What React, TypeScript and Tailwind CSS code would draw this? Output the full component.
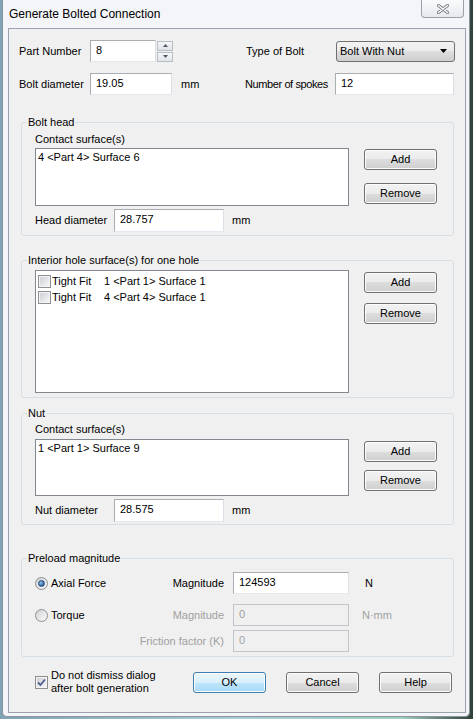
import React from "react";

const inputBox =
  "bg-white border border-[#abadb3] border-r-[#dbdfe6] border-b-[#e3e9ef] pl-[5px] pt-[3px] leading-[13px]";

function WinButton({ label, isDefault }: { label: string; isDefault?: boolean }) {
  return (
    <div
      className={`w-[73px] h-[21px] flex items-center justify-center rounded-[3px] border leading-[13px] shadow-[inset_0_0_0_1px_#fcfcfc] ${
        isDefault
          ? "border-[#3c7fb1] bg-[linear-gradient(#eaf6fd_0%,#d9f0fc_50%,#bee6fd_50%,#a7d9f5_100%)] shadow-[inset_0_0_0_1px_#bfe6fb]"
          : "border-[#707070] bg-[linear-gradient(#f2f2f2_0%,#ebebeb_50%,#dddddd_50%,#cfcfcf_100%)]"
      }`}
    >
      {label}
    </div>
  );
}

function CheckBox({ checked }: { checked?: boolean }) {
  return (
    <div className="w-[13px] h-[13px] border border-[#8e8f8f] bg-[#f4f4f4] p-[1px] shrink-0">
      <div className="w-full h-full bg-[linear-gradient(135deg,#cdd0d5,#f7f7f7)] flex items-center justify-center">
        {checked && (
          <svg width="9" height="9" viewBox="0 0 9 9">
            <path d="M1 4.5 L3.5 7 L8 1.5" fill="none" stroke="#4b5f8f" strokeWidth="1.8" />
          </svg>
        )}
      </div>
    </div>
  );
}

function Radio({ checked }: { checked?: boolean }) {
  return (
    <div className="w-[13px] h-[13px] rounded-full border border-[#8e8f8f] bg-[linear-gradient(135deg,#cfd2d6,#fbfbfb)] flex items-center justify-center shrink-0">
      {checked && (
        <div className="w-[7px] h-[7px] rounded-full bg-[radial-gradient(circle_at_35%_35%,#8fc6ee,#2a629c_70%)] border border-[#2c4d78]" />
      )}
    </div>
  );
}

function Group({ title, className, children }: { title: string; className: string; children: React.ReactNode }) {
  return (
    <fieldset className={`ml-[12px] w-[433px] border border-[#d5dfe5] rounded-[3px] px-0 ${className}`}>
      <legend className="ml-[5px] px-[1px] leading-[13px]">{title}</legend>
      {children}
    </fieldset>
  );
}

function ListBox({ h, children }: { h: string; children?: React.ReactNode }) {
  return (
    <div className={`w-[314px] ${h} bg-white border border-[#828790] pl-[2px] pt-[2px] leading-[13px]`}>
      {children}
    </div>
  );
}

function HoleRow({ text }: { text: string }) {
  return (
    <div className="h-[16px] flex items-center">
      <CheckBox />
      <span className="ml-[1px] w-[52px]">Tight Fit</span>
      <span>{text}</span>
    </div>
  );
}

export default function App() {
  return (
    <div className="w-[473px] h-[719px] overflow-hidden bg-[linear-gradient(90deg,#7ea3b6,#a9cfd6_50%,#9fd0c0_85%,#2f403a_100%)] font-['Liberation_Sans',Arial,sans-serif] text-[11px] text-black">
      <div className="ml-[2px] w-[468px] h-[717px] bg-[#f3f5f8] border-x border-b border-[#8d939a] rounded-b-[5px]">
        {/* title bar */}
        <div className="h-[28px] flex items-start">
          <div className="pl-[6px] pt-[7px] text-[12px] leading-[14px]">Generate Bolted Connection</div>
          <div className="flex-1" />
          <div className="mr-[5px] w-[43px] h-[18px] rounded-b-[4px] border border-t-0 border-[#9aa0a7] bg-[linear-gradient(#fbfbfc,#e6e9ed)] flex items-center justify-center">
            <svg width="12" height="10" viewBox="0 0 12 10">
              <path d="M1.5 1.5 L10.5 8.5 M10.5 1.5 L1.5 8.5" stroke="#7d8086" strokeWidth="3.2" strokeLinecap="round" />
              <path d="M1.5 1.5 L10.5 8.5 M10.5 1.5 L1.5 8.5" stroke="#ffffff" strokeWidth="1.3" strokeLinecap="round" />
            </svg>
          </div>
        </div>

        {/* client area */}
        <div className="ml-[5px] w-[458px] h-[685px] border border-[#9aa3ad] bg-[#f0f0f0]">
          <div className="mt-[11px] ml-[10px] flex items-center h-[22px]">
            <span className="w-[71px]">Part Number</span>
            <div className={`w-[66px] h-[22px] ${inputBox}`}>8</div>
            <div className="ml-[1px] w-[16px] h-[21px] flex flex-col gap-[1px]">
              <div className="h-[10px] border border-[#b8bec6] bg-[linear-gradient(#f6f7f9,#dfe3e8)] flex items-center justify-center">
                <svg width="5" height="3" viewBox="0 0 5 3"><path d="M0 3 L2.5 0 L5 3 Z" fill="#4e5866" /></svg>
              </div>
              <div className="h-[10px] border border-[#b8bec6] bg-[linear-gradient(#f6f7f9,#dfe3e8)] flex items-center justify-center">
                <svg width="5" height="3" viewBox="0 0 5 3"><path d="M0 0 L2.5 3 L5 0 Z" fill="#4e5866" /></svg>
              </div>
            </div>
            <div className="w-[73px]" />
            <span className="w-[90px]">Type of Bolt</span>
            <div className="w-[119px] h-[21px] rounded-[3px] border border-[#707070] bg-[linear-gradient(#f2f2f2_0%,#ebebeb_50%,#dddddd_50%,#cfcfcf_100%)] flex items-center pl-[3px] pr-[7px]">
              <span className="flex-1">Bolt With Nut</span>
              <svg width="7" height="4" viewBox="0 0 7 4"><path d="M0 0 L7 0 L3.5 4 Z" fill="#000" /></svg>
            </div>
          </div>

          <div className="mt-[11px] ml-[10px] flex items-center h-[22px]">
            <span className="w-[71px]">Bolt diameter</span>
            <div className={`w-[82px] h-[22px] ${inputBox}`}>19.05</div>
            <span className="w-[73px] pl-[9px]">mm</span>
            <span className="w-[90px] whitespace-nowrap tracking-[-0.4px]">Number of spokes</span>
            <div className={`w-[119px] h-[22px] ${inputBox}`}>12</div>
          </div>

          <Group title="Bolt head" className="mt-[21px] pb-[3px]">
            <div className="pl-[13px]">
              <div className="mt-[4px] leading-[13px]">Contact surface(s)</div>
              <div className="mt-[2px] flex">
                <ListBox h="h-[58px]">4 &lt;Part 4&gt; Surface 6</ListBox>
                <div className="ml-[15px] mt-[1px]">
                  <WinButton label="Add" />
                  <div className="mt-[13px]"><WinButton label="Remove" /></div>
                </div>
              </div>
              <div className="mt-[3px] flex items-center h-[23px]">
                <span className="w-[79px]">Head diameter</span>
                <div className={`w-[110px] h-[23px] ${inputBox}`}>28.757</div>
                <span className="ml-[8px]">mm</span>
              </div>
            </div>
          </Group>

          <Group title="Interior hole surface(s) for one hole" className="mt-[18px] pb-[4px]">
            <div className="pl-[13px] mt-[3px] flex">
              <ListBox h="h-[123px]">
                <HoleRow text="1 <Part 1> Surface 1" />
                <HoleRow text="4 <Part 4> Surface 1" />
              </ListBox>
              <div className="ml-[15px] mt-[2px]">
                <WinButton label="Add" />
                <div className="mt-[10px]"><WinButton label="Remove" /></div>
              </div>
            </div>
          </Group>

          <Group title="Nut" className="mt-[9px] pb-[2px]">
            <div className="pl-[13px]">
              <div className="mt-[3px] leading-[13px]">Contact surface(s)</div>
              <div className="mt-[3px] flex">
                <ListBox h="h-[57px]">1 &lt;Part 1&gt; Surface 9</ListBox>
                <div className="ml-[15px] mt-[2px]">
                  <WinButton label="Add" />
                  <div className="mt-[8px]"><WinButton label="Remove" /></div>
                </div>
              </div>
              <div className="mt-[3px] flex items-center h-[23px]">
                <span className="w-[79px]">Nut diameter</span>
                <div className={`w-[110px] h-[23px] ${inputBox}`}>28.575</div>
                <span className="ml-[8px]">mm</span>
              </div>
            </div>
          </Group>

          <Group title="Preload magnitude" className="mt-[27px] pb-[4px]">
            <div className="pl-[13px]">
              <div className="mt-[7px] flex items-center h-[22px]">
                <div className="w-[189px] flex items-center justify-between">
                  <div className="flex items-center">
                    <Radio checked />
                    <span className="ml-[3px]">Axial Force</span>
                  </div>
                  <span>Magnitude</span>
                </div>
                <div className={`ml-[9px] w-[116px] h-[22px] ${inputBox}`}>124593</div>
                <span className="ml-[16px]">N</span>
              </div>
              <div className="mt-[10px] flex items-center h-[22px]">
                <div className="w-[189px] flex items-center justify-between">
                  <div className="flex items-center">
                    <Radio />
                    <span className="ml-[3px]">Torque</span>
                  </div>
                  <span className="text-[#a0a0a0]">Magnitude</span>
                </div>
                <div className="ml-[9px] w-[116px] h-[22px] border border-[#c3c6ca] bg-[#f0f0f0] pl-[5px] pt-[3px] leading-[13px] text-[#a0a0a0]">0</div>
                <span className="ml-[13px] text-[#a0a0a0]">N·mm</span>
              </div>
              <div className="mt-[4px] flex items-center h-[22px]">
                <div className="w-[189px] flex justify-end">
                  <span className="text-[#a0a0a0]">Friction factor (K)</span>
                </div>
                <div className="ml-[9px] w-[116px] h-[22px] border border-[#c3c6ca] bg-[#f0f0f0] pl-[5px] pt-[3px] leading-[13px] text-[#a0a0a0]">0</div>
              </div>
            </div>
          </Group>

          <div className="mt-[12px] pl-[26px] flex items-center">
            <div className="w-[158px] flex items-center">
              <CheckBox checked />
              <div className="ml-[3px] leading-[13px]">
                Do not dismiss dialog
                <br />
                after bolt generation
              </div>
            </div>
            <div className="flex gap-[20px]">
              <WinButton label="OK" isDefault />
              <WinButton label="Cancel" />
              <WinButton label="Help" />
            </div>
          </div>
        </div>
      </div>
    </div>
  );
}
